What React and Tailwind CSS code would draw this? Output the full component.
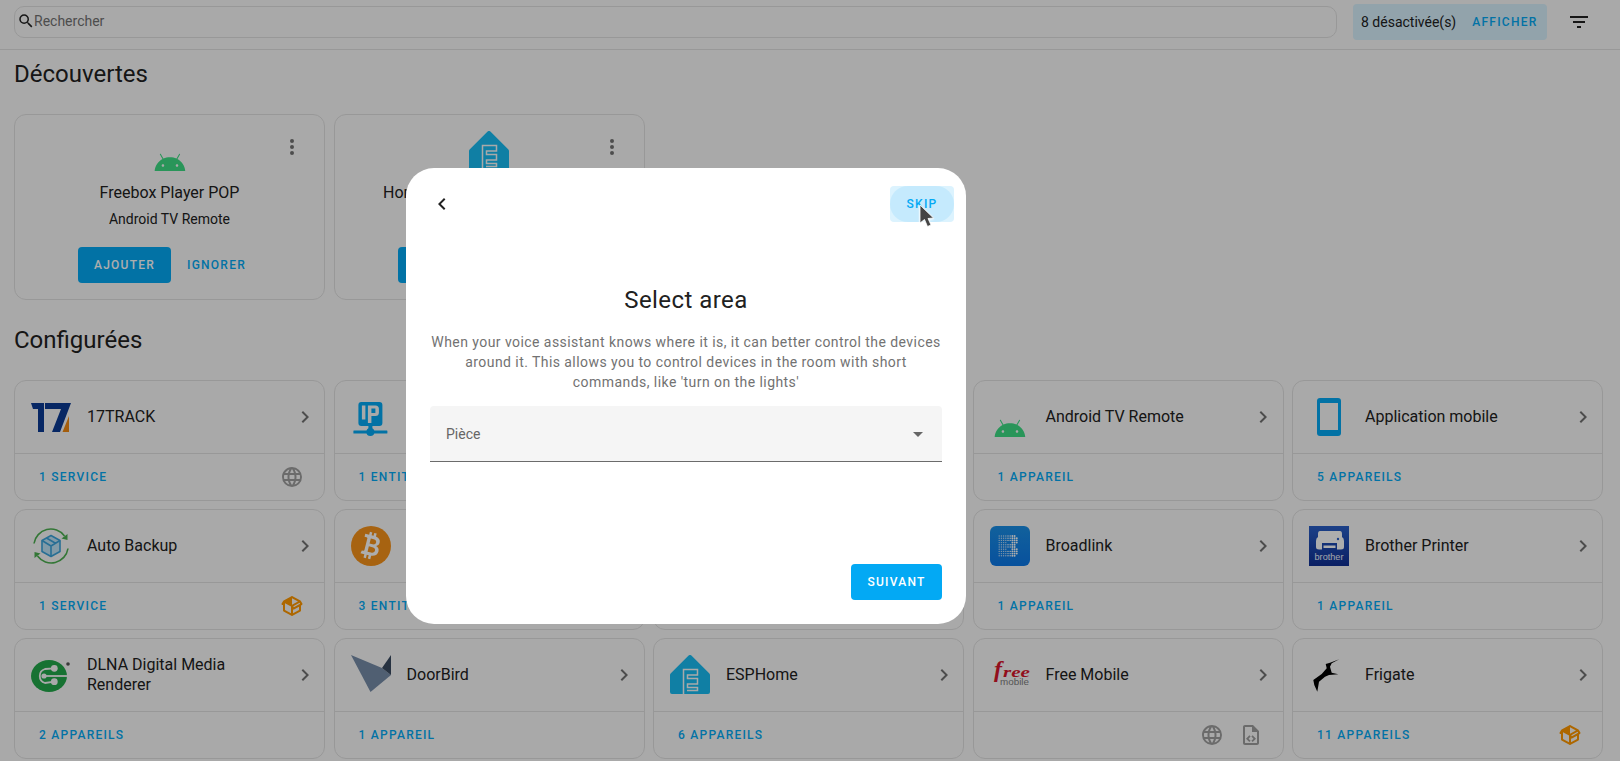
const MDI = {
  magnify: 'M9.5,3A6.5,6.5 0 0,1 16,9.5C16,11.11 15.41,12.59 14.44,13.73L14.71,14H15.5L20.5,19L19,20.5L14,15.5V14.71L13.73,14.44C12.59,15.41 11.11,16 9.5,16A6.5,6.5 0 0,1 3,9.5A6.5,6.5 0 0,1 9.5,3M9.5,5C7,5 5,7 5,9.5C5,12 7,14 9.5,14C12,14 14,12 14,9.5C14,7 12,5 9.5,5Z',
  filter: 'M6,13H18V11H6M3,6V8H21V6M10,18H14V16H10V18Z',
  dots: 'M12,16A2,2 0 0,1 14,18A2,2 0 0,1 12,20A2,2 0 0,1 10,18A2,2 0 0,1 12,16M12,10A2,2 0 0,1 14,12A2,2 0 0,1 12,14A2,2 0 0,1 10,12A2,2 0 0,1 12,10M12,4A2,2 0 0,1 14,6A2,2 0 0,1 12,8A2,2 0 0,1 10,6A2,2 0 0,1 12,4Z',
  right: 'M8.59,16.58L13.17,12L8.59,7.41L10,6L16,12L10,18L8.59,16.58Z',
  left: 'M15.41,16.58L10.83,12L15.41,7.41L14,6L8,12L14,18L15.41,16.58Z',
  down: 'M7,10L12,15L17,10H7Z',
  web: 'M16.36,14C16.44,13.34 16.5,12.68 16.5,12C16.5,11.32 16.44,10.66 16.36,10H19.74C19.9,10.64 20,11.31 20,12C20,12.69 19.9,13.36 19.74,14M14.59,19.56C15.19,18.45 15.65,17.25 15.97,16H18.92C17.96,17.65 16.43,18.93 14.59,19.56M14.34,14H9.66C9.56,13.34 9.5,12.68 9.5,12C9.5,11.32 9.56,10.65 9.66,10H14.34C14.43,10.65 14.5,11.32 14.5,12C14.5,12.68 14.43,13.34 14.34,14M12,19.96C11.17,18.76 10.5,17.43 10.09,16H13.91C13.5,17.43 12.83,18.76 12,19.96M8,8H5.08C6.03,6.34 7.57,5.06 9.4,4.44C8.8,5.55 8.35,6.75 8,8M5.08,16H8C8.35,17.25 8.8,18.45 9.4,19.56C7.57,18.93 6.03,17.65 5.08,16M4.26,14C4.1,13.36 4,12.69 4,12C4,11.31 4.1,10.64 4.26,10H7.64C7.56,10.66 7.5,11.32 7.5,12C7.5,12.68 7.56,13.34 7.64,14M12,4.03C12.83,5.23 13.5,6.57 13.91,8H10.09C10.5,6.57 11.17,5.23 12,4.03M18.92,8H15.97C15.65,6.75 15.19,5.55 14.59,4.44C16.43,5.07 17.96,6.34 18.92,8M12,2C6.47,2 2,6.5 2,12A10,10 0 0,0 12,22A10,10 0 0,0 22,12A10,10 0 0,0 12,2Z',
  pack: 'M2,10.96C1.5,10.68 1.35,10.07 1.63,9.59L3.13,7C3.24,6.8 3.41,6.66 3.6,6.58L11.43,2.18C11.59,2.06 11.79,2 12,2C12.21,2 12.41,2.06 12.57,2.18L20.47,6.62C20.66,6.72 20.82,6.86 20.91,7.03L22.36,9.6C22.64,10.08 22.47,10.69 22,10.96L21,11.54V16.5C21,16.88 20.79,17.21 20.47,17.38L12.57,21.82C12.41,21.94 12.21,22 12,22C11.79,22 11.59,21.94 11.43,21.82L3.53,17.38C3.21,17.21 3,16.88 3,16.5V10.96C2.7,11.13 2.32,11.14 2,10.96M12,4.15V4.15L12,10.85V10.85L17.96,7.5L12,4.15M5,15.91L11,19.29V12.58L5,9.21V15.91M19,15.91V12.69L14,15.59C13.67,15.77 13.3,15.76 13,15.6V19.29L19,15.91M13.85,13.36L20.13,9.73L19.55,8.72L13.27,12.35L13.85,13.36Z',
  file: 'M14 2H6C4.89 2 4 2.9 4 4V20C4 21.11 4.89 22 6 22H18C19.11 22 20 21.11 20 20V8L14 2M18 20H6V4H13V9H18V20M9.54 15.65L11.63 17.74L10.35 19L7 15.65L10.35 12.3L11.63 13.56L9.54 15.65M17 15.65L13.65 19L12.38 17.74L14.47 15.65L12.38 13.56L13.65 12.3L17 15.65Z',
};

const ANDROID = 'M16.61 15.15C16.15 15.15 15.77 14.78 15.77 14.32S16.15 13.5 16.61 13.5H16.61C17.07 13.5 17.45 13.86 17.45 14.32C17.45 14.78 17.07 15.15 16.61 15.15M7.41 15.15C6.95 15.15 6.57 14.78 6.57 14.32C6.57 13.86 6.95 13.5 7.41 13.5H7.41C7.87 13.5 8.24 13.86 8.24 14.32C8.24 14.78 7.87 15.15 7.41 15.15M16.91 10.14L18.58 7.26C18.67 7.09 18.61 6.88 18.45 6.79C18.28 6.69 18.07 6.75 18 6.92L16.29 9.83C14.95 9.22 13.5 8.9 12 8.91C10.47 8.91 9 9.24 7.73 9.82L6.04 6.91C5.95 6.74 5.74 6.68 5.57 6.78C5.4 6.87 5.35 7.08 5.44 7.25L7.1 10.13C4.25 11.69 2.29 14.58 2 18H22C21.72 14.59 19.77 11.7 16.91 10.14H16.91Z';

function Mdi({ path, size = 24, className = '' }) {
  return (
    <svg width={size} height={size} viewBox="0 0 24 24" fill="currentColor" className={`shrink-0 ${className}`}>
      <path d={path} />
    </svg>
  );
}

function Box({ children }) {
  return <svg width="40" height="40" viewBox="0 0 40 40" className="shrink-0">{children}</svg>;
}

const AndroidLogo = () => (
  <Box>
    <g transform="translate(1.6 12.5) scale(1.53)"><path d={ANDROID} fill="#3ddc84" /></g>
  </Box>
);

const EspLogo = () => (
  <Box>
    <path d="M18.6 0.6a2 2 0 0 1 2.8 0L39.4 18.6a2 2 0 0 1 .6 1.4V37a2 2 0 0 1-2 2H2a2 2 0 0 1-2-2V20a2 2 0 0 1 .6-1.4Z" fill="#18bcf2" />
    <path d="M13.5 39V14.5H27.5V20H17.5V23.5H27.5V29H17.5V32.5H27.5V35.5H17" fill="none" stroke="#fafafa" strokeWidth="1.5" />
  </Box>
);

const TrackLogo = () => (
  <Box>
    <path d="M0 6H13V35H7V12H2Z" fill="#0b3a94" />
    <path d="M14 6H40L29 35H21L30 12H14Z" fill="#0b3a94" />
    <path d="M38 19V35H31.5Z" fill="#f08a12" />
  </Box>
);

const IpLogo = () => (
  <Box>
    <g transform="translate(2.4 0)">
      <rect x="5" y="5" width="24" height="24" rx="3" fill="#03a9f4" />
      <rect x="8.5" y="8.5" width="3.5" height="14" fill="#fafafa" />
      <path fillRule="evenodd" d="M14.5 8.5H22a3.5 3.5 0 0 1 3.5 3.5V15.5a3.5 3.5 0 0 1-3.5 3.5H18V26H14.5ZM18 11.5V16H22V11.5Z" fill="#fafafa" />
      <rect x="0" y="33.5" width="34" height="3" rx="0.5" fill="#03a9f4" />
      <rect x="15" y="28" width="4" height="6" fill="#03a9f4" />
      <circle cx="17" cy="35" r="4" fill="#03a9f4" />
    </g>
  </Box>
);

const PhoneLogo = () => (
  <Box>
    <rect x="8" y="1" width="24" height="38" rx="3" fill="#03a9f4" />
    <rect x="11" y="6" width="18" height="27" fill="#fafafa" />
  </Box>
);

const BackupLogo = () => (
  <Box>
    <path d="M3 17.5A17 17 0 0 1 33.5 10" fill="none" stroke="#4caf50" strokeWidth="1.6" />
    <path d="M37 22.5A17 17 0 0 1 6.5 30" fill="none" stroke="#4caf50" strokeWidth="1.6" />
    <path d="M36.5 8L36.5 14L30.5 12.5Z" fill="#4caf50" />
    <path d="M3.5 32L3.5 26L9.5 27.5Z" fill="#4caf50" />
    <path d="M20 9.5L29 14.5V25.5L20 30.5L11 25.5V14.5Z" fill="#bfe3f7" stroke="#3aa3db" strokeWidth="1.6" strokeLinejoin="round" />
    <path d="M11 14.5L20 20L29 14.5M20 20V30.5M15.5 12L24.5 17.2" fill="none" stroke="#3aa3db" strokeWidth="1.6" />
  </Box>
);

const BitcoinLogo = () => (
  <Box>
    <circle cx="20" cy="20" r="20" fill="#f7931a" />
    <g transform="rotate(14 20 20)">
      <path fillRule="evenodd" d="M13.5 9.5H15.5V6.5H18V9.5H20V6.5H22.5V9.6C26 10.2 27.6 12 27.6 14.6C27.6 16.8 26.5 18.1 25 18.8C27.2 19.4 28.6 21 28.6 23.6C28.6 27 26.3 29 22.5 29.4V33H20V29.5H18V33H15.5V29.5H11.5L12.2 26.5H13.5C14.2 26.5 14.6 26.1 14.6 25.5V13.5C14.6 12.9 14.2 12.5 13.5 12.5H11.5V9.5ZM18 12.7V18H21C23 18 24.1 16.9 24.1 15.3C24.1 13.7 23 12.7 21 12.7ZM18 20.8V26.3H21.6C23.7 26.3 25 25.3 25 23.5C25 21.8 23.7 20.8 21.6 20.8Z" fill="#fff" />
    </g>
  </Box>
);

const BroadlinkLogo = () => {
  const rows = [
    [4, 5, 6, 7, 8, 9, 10, 11],
    [4, 5, 6, 7, 8, 9, 10, 11, 12],
    [4, 5, 6, 7, 8, 9, 10, 11, 12],
    [4, 5, 6, 7, 10, 11, 12],
    [4, 5, 6, 7, 8, 9, 10, 11],
    [4, 5, 6, 7, 8, 9, 10, 11],
    [4, 5, 6, 7, 10, 11, 12],
    [4, 5, 6, 7, 8, 9, 10, 11, 12],
    [4, 5, 6, 7, 8, 9, 10, 11, 12],
    [4, 5, 6, 7, 8, 9, 10, 11],
  ];
  return (
    <Box>
      <defs>
        <linearGradient id="bl" x1="0" y1="0" x2="0" y2="1">
          <stop offset="0" stopColor="#1a8fe6" />
          <stop offset="1" stopColor="#0c78e8" />
        </linearGradient>
      </defs>
      <rect width="40" height="40" rx="6" fill="url(#bl)" />
      {rows.map((row, r) => row.map((c) => (
        <circle key={`${r}-${c}`} cx={c * 2.2 + 0.4} cy={r * 2.2 + 10} r={c > 9 ? 0.95 : 0.7} fill="#fff" opacity={c > 7 ? 1 : 0.7} />
      )))}
    </Box>
  );
};

const BrotherLogo = () => (
  <Box>
    <defs>
      <linearGradient id="br" x1="0" y1="0" x2="0" y2="1">
        <stop offset="0" stopColor="#2a5fc8" />
        <stop offset="1" stopColor="#102f94" />
      </linearGradient>
    </defs>
    <rect width="40" height="40" fill="url(#br)" />
    <path d="M11 5H31Q33 5 33 8V11Q35 12 35 15V21Q35 23.5 32 23.5H28V17H13V23.5H10Q7 23.5 7 21V15Q7 12 9 11V8Q9 5 11 5Z" fill="#fff" />
    <path d="M14.5 19.5H26.5V22H14.5Z" fill="#fff" />
    <circle cx="29" cy="13" r="1.2" fill="#2a5fc8" />
    <text x="5.5" y="34" fontFamily="'Liberation Sans',sans-serif" fontSize="9.5" fill="#eef2fd" textLength="29" lengthAdjust="spacingAndGlyphs">brother</text>
  </Box>
);

const DlnaLogo = () => (
  <Box>
    <ellipse cx="18" cy="21" rx="18" ry="16" fill="#22a84a" />
    <path d="M23.3 13.3L14 14A7.3 7.3 0 0 0 14 28L23.3 26.7" fill="none" stroke="#fafafa" strokeWidth="1.8" />
    <path d="M13 21H36" fill="none" stroke="#fafafa" strokeWidth="1.8" />
    <circle cx="23.3" cy="13.3" r="3.4" fill="#fafafa" />
    <circle cx="23.3" cy="26.7" r="3.4" fill="#fafafa" />
    <circle cx="13" cy="21" r="2.6" fill="#fafafa" />
    <circle cx="37" cy="9" r="1.8" fill="#555" />
  </Box>
);

const DoorBirdLogo = () => (
  <Box>
    <path d="M0 0L31 13L40 20L19.5 37Z" fill="#768ca8" />
    <path d="M40 0V20L31 13Z" fill="#3a4a60" />
  </Box>
);

const FreeLogo = () => (
  <Box>
    <text x="4" y="22" fontFamily="'Liberation Serif',serif" fontStyle="italic" fontWeight="700" fill="#d8162c">
      <tspan fontSize="24">f</tspan>
      <tspan fontSize="15" dx="1" textLength="27" lengthAdjust="spacingAndGlyphs">ree</tspan>
    </text>
    <text x="10" y="30" fontFamily="'Liberation Sans',sans-serif" fontSize="9.5" fill="#7d7d7d" textLength="29" lengthAdjust="spacingAndGlyphs">mobile</text>
  </Box>
);

const FrigateLogo = () => (
  <Box>
    <path d="M30.3 4.3L22.7 8.3L21 11.7L22.7 17.7L29.3 19.3L20 20L16 21.7L10 26.7L8.3 36.7L5.3 30L4.3 25L12.7 19L17.7 13.3L16.7 9L21 7.7Z" fill="#000" />
  </Box>
);

const discovered = [
  { name: 'Freebox Player POP', sub: 'Android TV Remote', logo: AndroidLogo },
  { name: 'Home Assistant Voice 09f5a3', sub: 'ESPHome', logo: EspLogo },
];

const rows = [
  { name: '17TRACK', count: '1 SERVICE', logo: TrackLogo, icons: [MDI.web], tone: 'gray' },
  { name: '', count: '1 ENTITÉ', logo: IpLogo },
  { name: '', count: '' },
  { name: 'Android TV Remote', count: '1 APPAREIL', logo: AndroidLogo },
  { name: 'Application mobile', count: '5 APPAREILS', logo: PhoneLogo },
  { name: 'Auto Backup', count: '1 SERVICE', logo: BackupLogo, icons: [MDI.pack], tone: 'orange' },
  { name: '', count: '3 ENTITÉS', logo: BitcoinLogo },
  { name: '', count: '' },
  { name: 'Broadlink', count: '1 APPAREIL', logo: BroadlinkLogo },
  { name: 'Brother Printer', count: '1 APPAREIL', logo: BrotherLogo },
  { name: 'DLNA Digital Media Renderer', count: '2 APPAREILS', logo: DlnaLogo },
  { name: 'DoorBird', count: '1 APPAREIL', logo: DoorBirdLogo },
  { name: 'ESPHome', count: '6 APPAREILS', logo: EspLogo },
  { name: 'Free Mobile', count: '', logo: FreeLogo, icons: [MDI.web, MDI.file], tone: 'gray' },
  { name: 'Frigate', count: '11 APPAREILS', logo: FrigateLogo, icons: [MDI.pack], tone: 'orange' },
];

function DiscoveredCard({ name, sub, logo: Logo }) {
  return (
    <div className="relative flex h-[186px] flex-col items-center rounded-xl border border-[#e0e0e0] pt-4">
      <Logo />
      <div className="mt-[10px] text-base leading-6 text-[#212121]">{name}</div>
      <div className="mt-1 text-sm leading-5 text-[#212121]">{sub}</div>
      <div className="mt-[18px] flex w-full items-center pl-[63px]">
        <span className="flex h-9 w-[93px] items-center justify-center rounded bg-[#03a9f4] text-[12px] font-medium tracking-[1.25px] text-white">AJOUTER</span>
        <span className="ml-4 text-[12px] font-medium tracking-[1.25px] text-[#03a9f4]">IGNORER</span>
      </div>
      <Mdi path={MDI.dots} className="absolute right-[20px] top-5 text-[#727272]" />
    </div>
  );
}

function IntegrationCard({ name, count, logo: Logo, icons = [], tone }) {
  return (
    <div className="flex h-[121px] flex-col rounded-xl border border-[#e0e0e0]">
      <div className="flex h-[73px] items-center border-b border-[#e0e0e0] pl-4 pr-[7.5px]">
        {Logo ? <Logo /> : <div className="h-10 w-10" />}
        <div className="ml-4 flex-1 text-base leading-5 text-[#212121]">{name}</div>
        <Mdi path={MDI.right} className="text-[#727272]" />
      </div>
      <div className="flex flex-1 items-center justify-between pl-6 pr-5">
        <span className="text-[12px] font-medium tracking-[1.25px] text-[#03a9f4]">{count}</span>
        <div className="flex items-center gap-[15px]">
          {icons.map((path, i) => (
            <Mdi key={i} path={path} className={tone === 'orange' ? 'text-[#ff9800]' : 'text-[#9e9e9e]'} />
          ))}
        </div>
      </div>
    </div>
  );
}

function Dialog() {
  return (
    <div className="absolute left-[406px] top-[168px] flex h-[456px] w-[560px] flex-col rounded-[28px] bg-white px-6 pb-6 pt-[18px]">
      <div className="flex items-center justify-between">
        <Mdi path={MDI.left} className="text-[#212121]" />
        <div className="relative -mr-3 flex h-9 w-16 items-center justify-center rounded bg-[#dcf3fe]">
          <div className="absolute inset-0 rounded-[22px] bg-[#c5eafd]" />
          <span className="relative text-[12px] font-medium tracking-[1.25px] text-[#03a9f4]">SKIP</span>
        </div>
      </div>
      <h2 className="mt-[62px] text-center text-2xl leading-8 font-normal tracking-[0.45px] text-[#212121]">Select area</h2>
      <p className="mt-4 text-center text-sm leading-5 tracking-[0.44px] text-[#727272]">
        When your voice assistant knows where it is, it can better control the devices around it. This allows you to control devices in the room with short commands, like 'turn on the lights'
      </p>
      <div className="mt-[14px] flex h-14 items-center justify-between rounded-t border-b border-[#6b6b6b] bg-[#f5f5f5] pl-4 pr-3">
        <span className="text-sm text-[#666666]">Pièce</span>
        <Mdi path={MDI.down} className="text-[#666666]" />
      </div>
      <div className="mt-auto flex justify-end">
        <span className="flex h-9 w-[91px] items-center justify-center rounded bg-[#03a9f4] text-[12px] font-medium tracking-[1.25px] text-white">SUIVANT</span>
      </div>
      <svg width="18" height="26" viewBox="0 0 18 26" className="absolute left-[513px] top-[36px] drop-shadow-[0_1px_1px_rgba(255,255,255,0.9)]">
        <path d="M1 1L1 19L5.5 15.5L8.5 22.5L12 21L9 14.5L14.5 14Z" fill="#444444" stroke="#ffffff" strokeWidth="0.8" />
      </svg>
    </div>
  );
}

export default function App() {
  return (
    <div className="relative h-[761px] w-[1620px] overflow-hidden bg-[#fafafa] font-['Roboto',sans-serif]">
      <header className="flex h-[50px] items-center border-b border-[#e0e0e0] pb-[9px] pt-1 pl-[14px] pr-[29px]">
        <div className="flex h-[32px] flex-1 items-center rounded-[10px] border border-[#e0e0e0] pb-0.5 pl-[2px]">
          <Mdi path={MDI.magnify} size={18} className="text-[#212121]" />
          <span className="ml-[-1px] text-sm text-[#727272]">Rechercher</span>
        </div>
        <div className="ml-4 flex h-9 w-[194px] items-center rounded bg-[#d7f0fc] pl-2">
          <span className="text-sm text-[#212121]">8 désactivée(s)</span>
          <span className="ml-4 text-[12px] font-medium tracking-[1.25px] text-[#03a9f4]">AFFICHER</span>
        </div>
        <Mdi path={MDI.filter} className="ml-5 text-[#212121]" />
      </header>
      <main className="pl-[14px]">
        <h1 className="mt-2 text-2xl leading-8 font-normal text-[#212121]">Découvertes</h1>
        <div className="mt-6 grid w-[1589px] grid-cols-5 gap-x-[8.5px]">
          {discovered.map((card) => <DiscoveredCard key={card.name} {...card} />)}
        </div>
        <h1 className="mt-6 text-2xl leading-8 font-normal text-[#212121]">Configurées</h1>
        <div className="mt-6 grid w-[1589px] grid-cols-5 gap-x-[8.5px] gap-y-2">
          {rows.map((card, i) => <IntegrationCard key={i} {...card} />)}
        </div>
      </main>
      <div className="absolute inset-0 bg-black/[0.32]" />
      <Dialog />
    </div>
  );
}
